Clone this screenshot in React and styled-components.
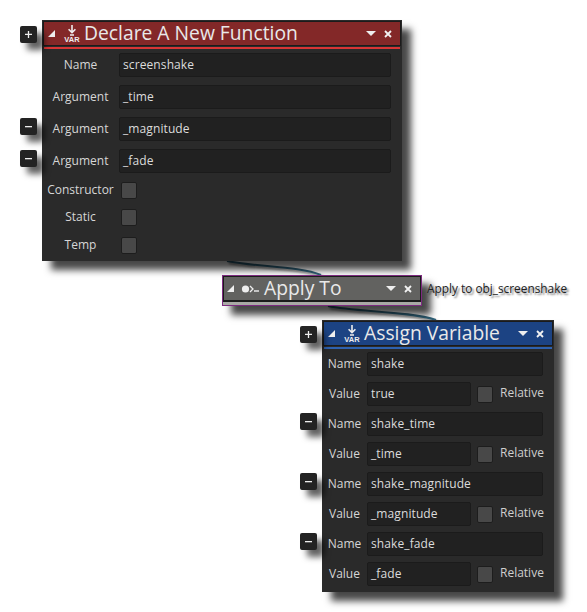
import React from "react";
import styled, { createGlobalStyle } from "styled-components";

const Global = createGlobalStyle`
  html, body { margin: 0; padding: 0; background: #fff; }
  body { font-family: "Open Sans", "Noto Sans", sans-serif; }
  #root { width: 587px; height: 612px; }
`;

const Canvas = styled.div`
  position: relative;
  width: 587px;
  height: 612px;
  overflow: hidden;
  background: #fff;
`;

const Wires = styled.svg`
  position: absolute;
  inset: 0;
  filter: drop-shadow(2px 2px 1px rgba(0, 0, 0, 0.5));
`;

const Node = styled.section`
  position: absolute;
  left: ${(p) => p.$x}px;
  top: ${(p) => p.$y}px;
  width: ${(p) => p.$w}px;
  height: ${(p) => p.$h}px;
  box-sizing: border-box;
  background: #2a2a2a;
  box-shadow: 9px 9px 7px rgba(0, 0, 0, 0.72);
  display: flex;
  flex-direction: column;
`;

const Header = styled.header`
  box-sizing: border-box;
  margin: 1px 1px 0;
  height: 25px;
  flex: none;
  background: ${(p) => p.$color};
  border: 1px solid #1b1b1b;
  display: flex;
  align-items: center;
  color: #e9e9e9;
  padding: 0 6px 0 4px;
`;

const Strip = styled.div`
  flex: none;
  height: 2px;
  margin: 1px 2px 0;
  background: ${(p) => p.$color};
`;

const Collapse = styled.span`
  width: 0;
  height: 0;
  flex: none;
  border-style: solid;
  border-width: 0 0 7px 7px;
  border-color: transparent transparent #eee transparent;
  margin-right: 9px;
`;

const Title = styled.h2`
  flex: 1;
  margin: 0;
  padding-bottom: 2px;
  font-size: 19.3px;
  font-weight: 400;
  line-height: 21px;
  white-space: nowrap;
  margin-left: ${(p) => p.$gap ?? 4}px;
`;

const Menu = styled.span`
  width: 0;
  height: 0;
  flex: none;
  border-style: solid;
  border-width: 5px 5px 0 5px;
  border-color: #eee transparent transparent transparent;
  margin-right: 8px;
`;

const Close = styled.svg`
  width: 8px;
  height: 8px;
  flex: none;
  margin-right: 2px;
`;

const VarBox = styled.span`
  width: 16px;
  flex: none;
  display: flex;
  flex-direction: column;
  align-items: center;
  color: #eee;
  font-size: 7.5px;
  font-weight: 700;
  line-height: 7px;
  font-family: "Liberation Sans", sans-serif;
`;

const Body = styled.div`
  display: flex;
  flex-direction: column;
  padding: ${(p) => p.$top}px 11px 0 0;
`;

const Row = styled.div`
  display: flex;
  align-items: center;
  height: 24px;
  margin-bottom: ${(p) => p.$gap}px;
`;

const Label = styled.span`
  width: ${(p) => p.$w}px;
  flex: none;
  padding-bottom: 2px;
  text-align: center;
  color: #d6d6d6;
  font-size: 12px;
  white-space: nowrap;
`;

const Field = styled.div`
  box-sizing: border-box;
  height: 24px;
  flex: ${(p) => (p.$w ? "none" : 1)};
  width: ${(p) => (p.$w ? `${p.$w}px` : "auto")};
  background: #212121;
  border: 1px solid #1b1b1b;
  border-radius: 2px;
  color: #dcdcdc;
  font-size: 12px;
  line-height: 22px;
  padding-left: 3px;
  letter-spacing: 0.1px;
`;

const Check = styled.span`
  box-sizing: border-box;
  width: 16px;
  height: 17px;
  flex: none;
  margin-left: ${(p) => p.$ml}px;
  background: #484848;
  border: 1px solid #1d1d1d;
  border-radius: 2px;
`;

const Relative = styled.span`
  color: #cfcfcf;
  font-size: 12px;
  margin-left: 7px;
  padding-bottom: 4px;
`;

const Toggle = styled.button`
  position: absolute;
  left: ${(p) => p.$x}px;
  top: ${(p) => p.$y}px;
  width: 17px;
  height: 17px;
  padding: 0;
  border: 0;
  border-radius: 2px;
  background: #232323;
  box-shadow: 7px 7px 6px rgba(0, 0, 0, 0.62);
  display: flex;
  align-items: center;
  justify-content: center;
  & svg { display: block; }
`;

const ApplyNode = styled.section`
  position: absolute;
  left: 222px;
  top: 275px;
  width: 200px;
  height: 31px;
  box-sizing: border-box;
  border: 1px solid #7d2a80;
  background: #a9a9a5;
  box-shadow: 9px 9px 7px rgba(0, 0, 0, 0.72);
`;

const ApplyHeader = styled.header`
  box-sizing: border-box;
  height: 26px;
  background: #626260;
  border: 1px solid #1b1b1b;
  border-bottom-width: 2px;
  display: flex;
  align-items: center;
  color: #e9e9e9;
  padding: 0 6px 0 3px;
`;

const ApplyGlyph = styled.svg`
  flex: none;
  margin-left: -2px;
`;

const ApplyNote = styled.span`
  position: absolute;
  left: 427px;
  top: 280px;
  font-size: 11.85px;
  line-height: 16px;
  color: #222;
  text-shadow: 2px 2px 2px rgba(0, 0, 0, 0.55);
  white-space: nowrap;
`;

const Minus = () => (
  <svg width="9" height="9" viewBox="0 0 9 9">
    <rect x="1" y="4" width="7" height="1.3" fill="#eee" />
  </svg>
);
const Plus = () => (
  <svg width="9" height="9" viewBox="0 0 9 9">
    <path d="M1 4.4h7M4.5 1v7" stroke="#eee" strokeWidth="1.3" />
  </svg>
);
const X = () => (
  <Close viewBox="0 0 8 8">
    <path d="M1 1l6 6M7 1L1 7" stroke="#f2f2f2" strokeWidth="1.8" />
  </Close>
);
const VarIcon = () => (
  <VarBox>
    <svg width="10" height="11" viewBox="0 0 10 11">
      <path d="M5 0v7M1.6 4.2L5 7.6l3.4-3.4M3 10h4" stroke="#eee" strokeWidth="1.6" fill="none" />
    </svg>
    VAR
  </VarBox>
);

const fnRows = [
  ["Name", "screenshake"],
  ["Argument", "_time"],
  ["Argument", "_magnitude"],
  ["Argument", "_fade"],
];
const assignRows = [
  ["shake", "true"],
  ["shake_time", "_time"],
  ["shake_magnitude", "_magnitude"],
  ["shake_fade", "_fade"],
];

export default function App() {
  return (
    <Canvas>
      <Global />
      <Wires width="587" height="612" viewBox="0 0 587 612">
        <path d="M227 261C255 267 300 266 321 275" stroke="#2f6178" strokeWidth="2" fill="none" />
        <path d="M328 306C355 312 410 311 436 320" stroke="#2f6178" strokeWidth="2" fill="none" />
      </Wires>

      <Node $x={42} $y={20} $w={360} $h={241}>
        <Header $color="#832828">
          <Collapse />
          <VarIcon />
          <Title>Declare A New Function</Title>
          <Menu />
          <X />
        </Header>
        <Strip $color="#d93535" />
        <Body $top={4}>
          {fnRows.map(([l, v], i) => (
            <Row key={v} $gap={i === 3 ? 5 : 8}>
              <Label $w={77}>{l}</Label>
              <Field>{v}</Field>
            </Row>
          ))}
          <Row $gap={3}>
            <Label $w={77}>Constructor</Label>
            <Check $ml={2} />
          </Row>
          <Row $gap={4}>
            <Label $w={77}>Static</Label>
            <Check $ml={2} />
          </Row>
          <Row $gap={0}>
            <Label $w={77}>Temp</Label>
            <Check $ml={2} />
          </Row>
        </Body>
      </Node>

      <Toggle $x={20} $y={26}><Plus /></Toggle>
      <Toggle $x={20} $y={118}><Minus /></Toggle>
      <Toggle $x={20} $y={150}><Minus /></Toggle>

      <ApplyNode>
        <ApplyHeader>
          <Collapse />
          <ApplyGlyph width="21" height="10" viewBox="0 0 21 10">
            <circle cx="4.5" cy="5" r="3.6" fill="#eee" />
            <path d="M9 2l3 3-3 3" stroke="#eee" strokeWidth="1.3" fill="none" />
            <path d="M13 7h5" stroke="#eee" strokeWidth="1.4" />
          </ApplyGlyph>
          <Title $gap={2}>Apply To</Title>
          <Menu />
          <X />
        </ApplyHeader>
      </ApplyNode>
      <ApplyNote>Apply to obj_screenshake</ApplyNote>

      <Node $x={322} $y={320} $w={232} $h={272}>
        <Header $color="#1c4383">
          <Collapse />
          <VarIcon />
          <Title>Assign Variable</Title>
          <Menu />
          <X />
        </Header>
        <Strip $color="#2e62b0" />
        <Body $top={3}>
          {assignRows.map(([n, v]) => (
            <React.Fragment key={n}>
              <Row $gap={6}>
                <Label $w={45}>Name</Label>
                <Field>{n}</Field>
              </Row>
              <Row $gap={6}>
                <Label $w={45}>Value</Label>
                <Field $w={104}>{v}</Field>
                <Check $ml={6} />
                <Relative>Relative</Relative>
              </Row>
            </React.Fragment>
          ))}
        </Body>
      </Node>

      <Toggle $x={300} $y={326}><Plus /></Toggle>
      <Toggle $x={300} $y={413}><Minus /></Toggle>
      <Toggle $x={300} $y={473}><Minus /></Toggle>
      <Toggle $x={300} $y={533}><Minus /></Toggle>
    </Canvas>
  );
}
